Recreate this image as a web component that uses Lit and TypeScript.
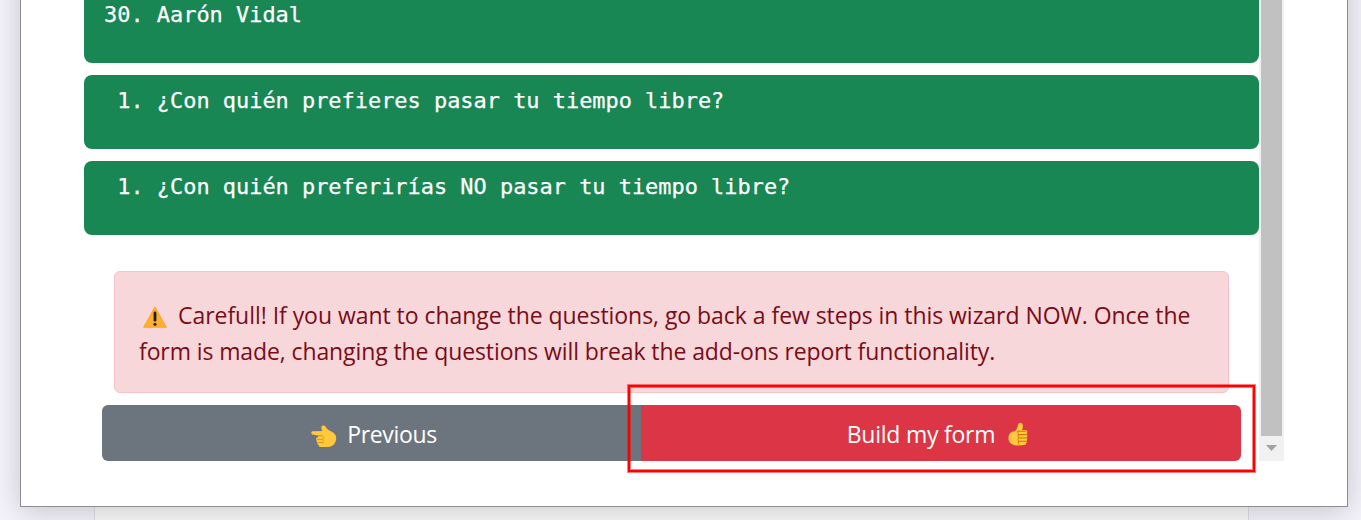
import { LitElement, html, css, svg } from "lit";
import { customElement } from "lit/decorators.js";

const warningIcon = html`<svg class="warn" viewBox="0 0 24 22" aria-hidden="true">
  ${svg`<path d="M12 1.2 23.2 21.2H.8Z" fill="#ffb02e" stroke="#fda52a" stroke-width="1.2" stroke-linejoin="round"/>
  <path d="M12 7v7.2" stroke="#212121" stroke-width="2.8" stroke-linecap="round"/>
  <circle cx="12" cy="18.3" r="1.55" fill="#212121"/>`}
</svg>`;

const pointLeftIcon = html`<svg class="point" viewBox="0 0 26 22" aria-hidden="true">
  ${svg`<path d="M1.800 6.300 11.500 6C10 4.300 9.900 2 11.100.9c1.300-1 2.800-.4 3.700 1 1.300 2.200 3 3.300 5.500 4.500 3.200 1.500 4.900 3.600 4.900 6.500 0 5.300-3.300 8.800-8.400 9H9.800c-1.500 0-2.300-.9-2.100-2-.9-.3-1.400-1.100-1.200-2.100-.8-.5-1.100-1.300-.8-2.200-.6-.6-.8-1.500-.4-2.400.3-.7.900-1.100 1.700-1.300L7.500 10.800 1.900 9.600C.9 9.400.3 8.800.3 7.900S.9 6.300 1.800 6.300Z" fill="#ffc83d"/>
  <path d="M7 10.800 11.300 10.800M6.500 14.300h4.900M7.500 17.400h4" fill="none" stroke="#d98b12" stroke-width=".9" stroke-linecap="round"/>
  <path d="M11.500 10.800q1.100.5 1.100 1.800 0 1.100-.8 1.700 1 .8.700 2-.2.900-.8 1.200.7.600.4 1.500" fill="none" stroke="#d98b12" stroke-width=".6"/>`}
</svg>`;

const thumbIcon = html`<svg class="thumb-up" viewBox="0 0 20 25" aria-hidden="true">
  ${svg`<path d="M6.800 9.300C8.800 7.500 9.600 5 10.100 2.800 10.500 1.200 11.600.5 12.900.8c1.500.4 2.100 1.800 2 3.500-.1 1.500-.4 2.500-.9 3.600h3c1.600 0 2.400 1 2.300 2.300 0 .8-.2 1.400-.6 1.800.5.500.7 1.100.7 1.800s-.3 1.300-.7 1.700c.4.400.5.900.5 1.500 0 .8-.3 1.300-.7 1.700.2.500.3.900.2 1.500-.2 1.600-1.200 2.700-2.700 2.900-1.700.3-3.400.5-5.400.5C4.300 23.600.4 20.800.4 16c0-3.400 1.800-5.600 4-6.300.9-.3 1.700 0 2.400-.4Z" fill="#ffc83d"/>
  <path d="M10.300 9.300h7M10.500 12.600h8M10.500 16h8M10.500 19.200h7.500" fill="none" stroke="#c97a05" stroke-width="1.100" stroke-linecap="round"/>
  <path d="M10.300 8.500q-1.300 2.400.200 4.100-1.200 1.700 0 3.400-1.200 1.600 0 3.200-.8 1.900.6 3.300" fill="none" stroke="#c97a05" stroke-width=".9"/>`}
</svg>`;

@customElement("app-root")
export class AppRoot extends LitElement {
  static styles = css`
    :host { display: block; height: 520px; overflow: hidden; background: #f5f3fb; font-family: "Open Sans", "Noto Sans", sans-serif; }
    * { box-sizing: border-box; }
    .stage { display: grid; grid-template-columns: 94px 1155px 1fr; height: 520px; }
    .under { grid-area: 1 / 2; background: #fafafa; border: solid #dedee4; border-width: 0 1px; }
    .dialog { grid-area: 1 / 1 / 2 / 4; position: relative; width: 1328px; height: 707px; margin: -200px 0 0 20px; padding: 199px 63px 45px;
      background: #fff; border: 1px solid #8e8c93; box-shadow: 0 4px 30px 1px rgba(0, 0, 0, .19); display: flex; }
    .content { width: 1175px; display: flex; flex-direction: column; }
    pre { margin: 0 0 12px; height: 74px; flex: none; padding: 8px 20px 0 20px; background: #198754; color: #fff; border-radius: 8px;
      font: 21.93px/36px "DejaVu Sans Mono", monospace; white-space: pre; -webkit-text-stroke: .25px #fff; }
    .first { height: 63px; border-radius: 0 0 8px 8px; padding-top: 1px; line-height: 28px; }
    .alert { height: 122px; flex: none; margin: 24px 30px 12px; padding: 25px 24px 0; background: #f8d7da; border: 1px solid #f5c2c7; border-radius: 6px;
      color: #790c17; font-size: 23px; line-height: 36px; white-space: nowrap; }
    .line { display: block; height: 36px; }
    .l1 { letter-spacing: -.045px; }
    .l2 { letter-spacing: -.105px; }
    .warn { width: 24px; height: 22px; margin: 0 11px 0 4px; vertical-align: -4px; }
    .buttons { display: flex; flex: none; margin: 0 18px; height: 56px; }
    .btn { display: flex; align-items: center; justify-content: center; border: 0; padding: 1px 0 0; margin: 0; color: #fff; font: 23px/36px "Open Sans", sans-serif; }
    .prev { width: 539px; background: #6c757d; border-radius: 6px 0 0 6px; padding-left: 5px; gap: 10px; letter-spacing: -.35px; }
    .build { width: 600px; background: #dc3545; border-radius: 0 6px 6px 0; padding-right: 7px; gap: 13px; letter-spacing: -.23px; }
    .point { width: 26px; height: 22px; margin-top: 4px; }
    .thumb-up { width: 20px; height: 25px; margin-top: 2px; }
    .scrollbar { width: 25px; height: 461px; background: #f1f1f1; display: flex; flex-direction: column; align-items: center; }
    .thumb { width: 21px; height: 436px; background: #c1c1c1; }
    .arrow { margin-top: 9px; width: 11px; height: 6px; background: #a3a3a3; clip-path: polygon(0 0, 100% 0, 50% 100%); }
    .frame { position: absolute; left: 607px; top: 584px; width: 627px; height: 87px; border: 2px solid #f00;
      box-shadow: 0 0 0 1px rgba(255, 0, 0, .5), inset 0 0 0 1px rgba(255, 0, 0, .5); }
  `;

  render() {
    return html`<div class="stage">
      <div class="under"></div>
      <div class="dialog">
        <div class="content">
          <pre class="first">30. Aarón Vidal</pre>
          <pre>${" 1. ¿Con quién prefieres pasar tu tiempo libre?"}</pre>
          <pre>${" 1. ¿Con quién preferirías NO pasar tu tiempo libre?"}</pre>
          <div class="alert">
            <span class="line">${warningIcon}<span class="l1">Carefull! If you want to change the questions, go back a few steps in this wizard NOW. Once the</span></span>
            <span class="line l2">form is made, changing the questions will break the add-ons report functionality.</span>
          </div>
          <div class="buttons">
            <button class="btn prev">${pointLeftIcon}<span>Previous</span></button>
            <button class="btn build"><span>Build my form</span>${thumbIcon}</button>
          </div>
        </div>
        <div class="scrollbar"><div class="thumb"></div><div class="arrow"></div></div>
        <div class="frame"></div>
      </div>
    </div>`;
  }
}
